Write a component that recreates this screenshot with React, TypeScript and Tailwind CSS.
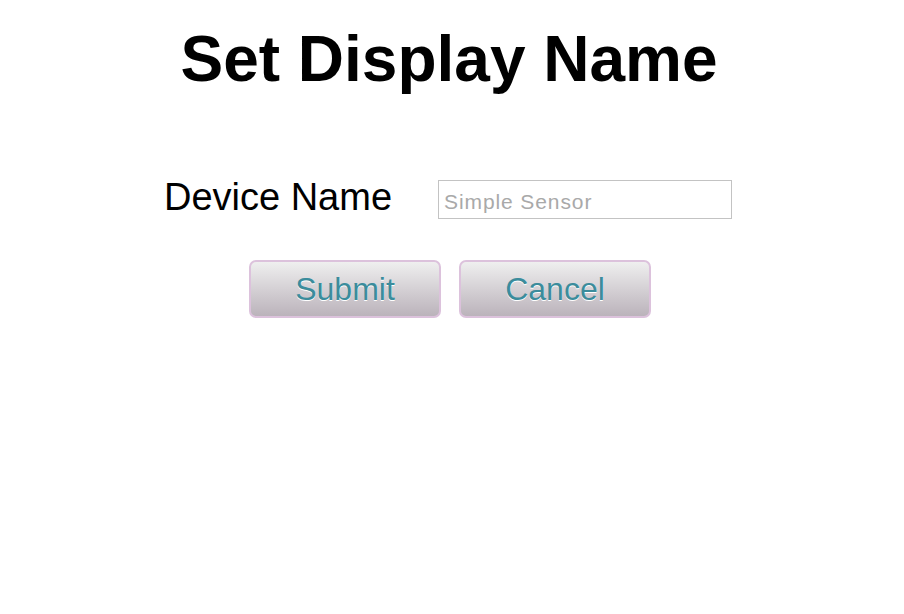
export default function App() {
  return (
    <div className="min-h-screen bg-white font-['Liberation_Sans',Arial,sans-serif] text-black">
      <div className="flex flex-col items-center">
        <h1 className="mt-[22px] pr-[6px] text-[64px] leading-[74px] font-bold">Set Display Name</h1>

        <div className="mt-[80px] flex items-start gap-[46px] pr-[8px]">
          <label htmlFor="device-name" className="text-[38px] leading-[42px]">
            Device Name
          </label>
          <input
            id="device-name"
            type="text"
            placeholder="Simple Sensor"
            className="mt-[4px] h-[39px] w-[294px] border border-[#c3c3c3] bg-white px-[5px] pt-[4px] text-[21px] tracking-[0.9px] text-black outline-none placeholder:text-[#a9a9a9]"
          />
        </div>

        <div className="mt-[41px] flex gap-[18px] pr-[4px]">
          <button className="h-[58px] w-[192px] rounded-[7px] border-2 border-[#dcc2dc] bg-linear-to-b from-[#efefef] to-[#bbb3bb] text-[32px] text-[#3b8c9c] [text-shadow:0_1px_0_#ffffff]">
            Submit
          </button>
          <button className="h-[58px] w-[192px] rounded-[7px] border-2 border-[#dcc2dc] bg-linear-to-b from-[#efefef] to-[#bbb3bb] text-[32px] text-[#3b8c9c] [text-shadow:0_1px_0_#ffffff]">
            Cancel
          </button>
        </div>
      </div>
    </div>
  );
}
